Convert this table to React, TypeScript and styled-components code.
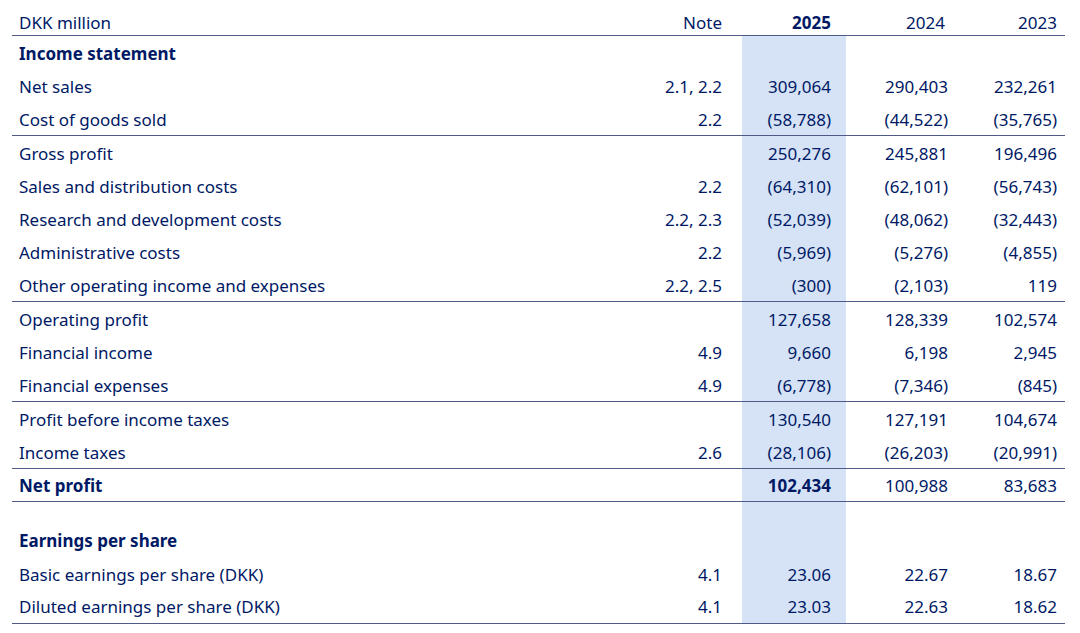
import { createGlobalStyle, styled } from 'styled-components';

// Income statement table, DKK million, with the current year column highlighted.

type Line = {
  label: string;
  note?: string;
  values: [string, string, string];
  bold?: boolean;
  rule?: boolean;
};

const ROWS: Line[] = [
  { label: 'Net sales', note: '2.1, 2.2', values: ['309,064', '290,403', '232,261'] },
  { label: 'Cost of goods sold', note: '2.2', values: ['(58,788)', '(44,522)', '(35,765)'], rule: true },
  { label: 'Gross profit', values: ['250,276', '245,881', '196,496'] },
  { label: 'Sales and distribution costs', note: '2.2', values: ['(64,310)', '(62,101)', '(56,743)'] },
  { label: 'Research and development costs', note: '2.2, 2.3', values: ['(52,039)', '(48,062)', '(32,443)'] },
  { label: 'Administrative costs', note: '2.2', values: ['(5,969)', '(5,276)', '(4,855)'] },
  { label: 'Other operating income and expenses', note: '2.2, 2.5', values: ['(300)', '(2,103)', '119'], rule: true },
  { label: 'Operating profit', values: ['127,658', '128,339', '102,574'] },
  { label: 'Financial income', note: '4.9', values: ['9,660', '6,198', '2,945'] },
  { label: 'Financial expenses', note: '4.9', values: ['(6,778)', '(7,346)', '(845)'], rule: true },
  { label: 'Profit before income taxes', values: ['130,540', '127,191', '104,674'] },
  { label: 'Income taxes', note: '2.6', values: ['(28,106)', '(26,203)', '(20,991)'], rule: true },
  { label: 'Net profit', values: ['102,434', '100,988', '83,683'], bold: true, rule: true },
];

const EPS: Line[] = [
  { label: 'Basic earnings per share (DKK)', note: '4.1', values: ['23.06', '22.67', '18.67'] },
  { label: 'Diluted earnings per share (DKK)', note: '4.1', values: ['23.03', '22.63', '18.62'], rule: true },
];

const GlobalStyle = createGlobalStyle`
  body {
    margin: 0;
    background: #ffffff;
    font-family: 'Noto Sans', 'Open Sans', sans-serif;
    color: #001965;
  }
`;

const Table = styled.div`
  display: flex;
  flex-direction: column;

  width: 1053px;
  margin-left: 12px;

  font-size: 17px;
  line-height: 24px;
`;

const Row = styled.div<{ $rule?: boolean; $head?: boolean; $height?: number }>`
  display: grid;
  grid-template-columns: 530px 200px 104px 117px 102px;

  box-sizing: border-box;
  height: ${({ $height }) => $height ?? 33.3}px;
  padding-top: ${({ $head }) => ($head ? '9px' : '0')};

  border-bottom: 1px solid ${({ $rule }) => ($rule ? '#4f5b86' : 'transparent')};
  ${({ $rule }) => (!$rule ? 'border-bottom: 0;' : '')}
`;

const Cell = styled.div<{ $num?: boolean; $bold?: boolean; $current?: boolean; $pad?: number }>`
  display: flex;
  align-items: center;
  justify-content: ${({ $num }) => ($num ? 'flex-end' : 'flex-start')};

  padding: 2px ${({ $pad }) => $pad ?? 0}px 0 ${({ $num }) => ($num ? 0 : 7)}px;

  background-color: ${({ $current }) => ($current ? '#d6e3f6' : 'transparent')};

  font-weight: ${({ $bold }) => ($bold ? 700 : 400)};
  white-space: nowrap;
`;

const PAD = [15, 15, 8];

function ValueCells({ values, bold }: { values: [string, string, string]; bold?: boolean }) {
  return (
    <>
      {values.map((v, i) => (
        <Cell key={i} $num $pad={PAD[i]} $current={i === 0} $bold={bold && i === 0}>
          {v}
        </Cell>
      ))}
    </>
  );
}

function BodyRow({ line }: { line: Line }) {
  return (
    <Row $rule={line.rule}>
      <Cell $bold={line.bold}>{line.label}</Cell>
      <Cell $num $pad={20}>
        {line.note}
      </Cell>
      <ValueCells values={line.values} bold={line.bold} />
    </Row>
  );
}

function SectionRow({ title, height }: { title: string; height?: number }) {
  return (
    <Row $height={height}>
      <Cell $bold>{title}</Cell>
      <Cell />
      <Cell $current />
      <Cell />
      <Cell />
    </Row>
  );
}

export default function App() {
  return (
    <>
      <GlobalStyle />
      <Table>
        <Row $head $rule $height={36}>
          <Cell>DKK million</Cell>
          <Cell $num $pad={20}>
            Note
          </Cell>
          <Cell $num $pad={15} $bold>
            2025
          </Cell>
          <Cell $num $pad={18}>
            2024
          </Cell>
          <Cell $num $pad={8}>
            2023
          </Cell>
        </Row>
        <SectionRow title="Income statement" />
        {ROWS.map((line) => (
          <BodyRow key={line.label} line={line} />
        ))}
        <SectionRow title="" height={21.5} />
        <SectionRow title="Earnings per share" />
        {EPS.map((line) => (
          <BodyRow key={line.label} line={line} />
        ))}
      </Table>
    </>
  );
}
